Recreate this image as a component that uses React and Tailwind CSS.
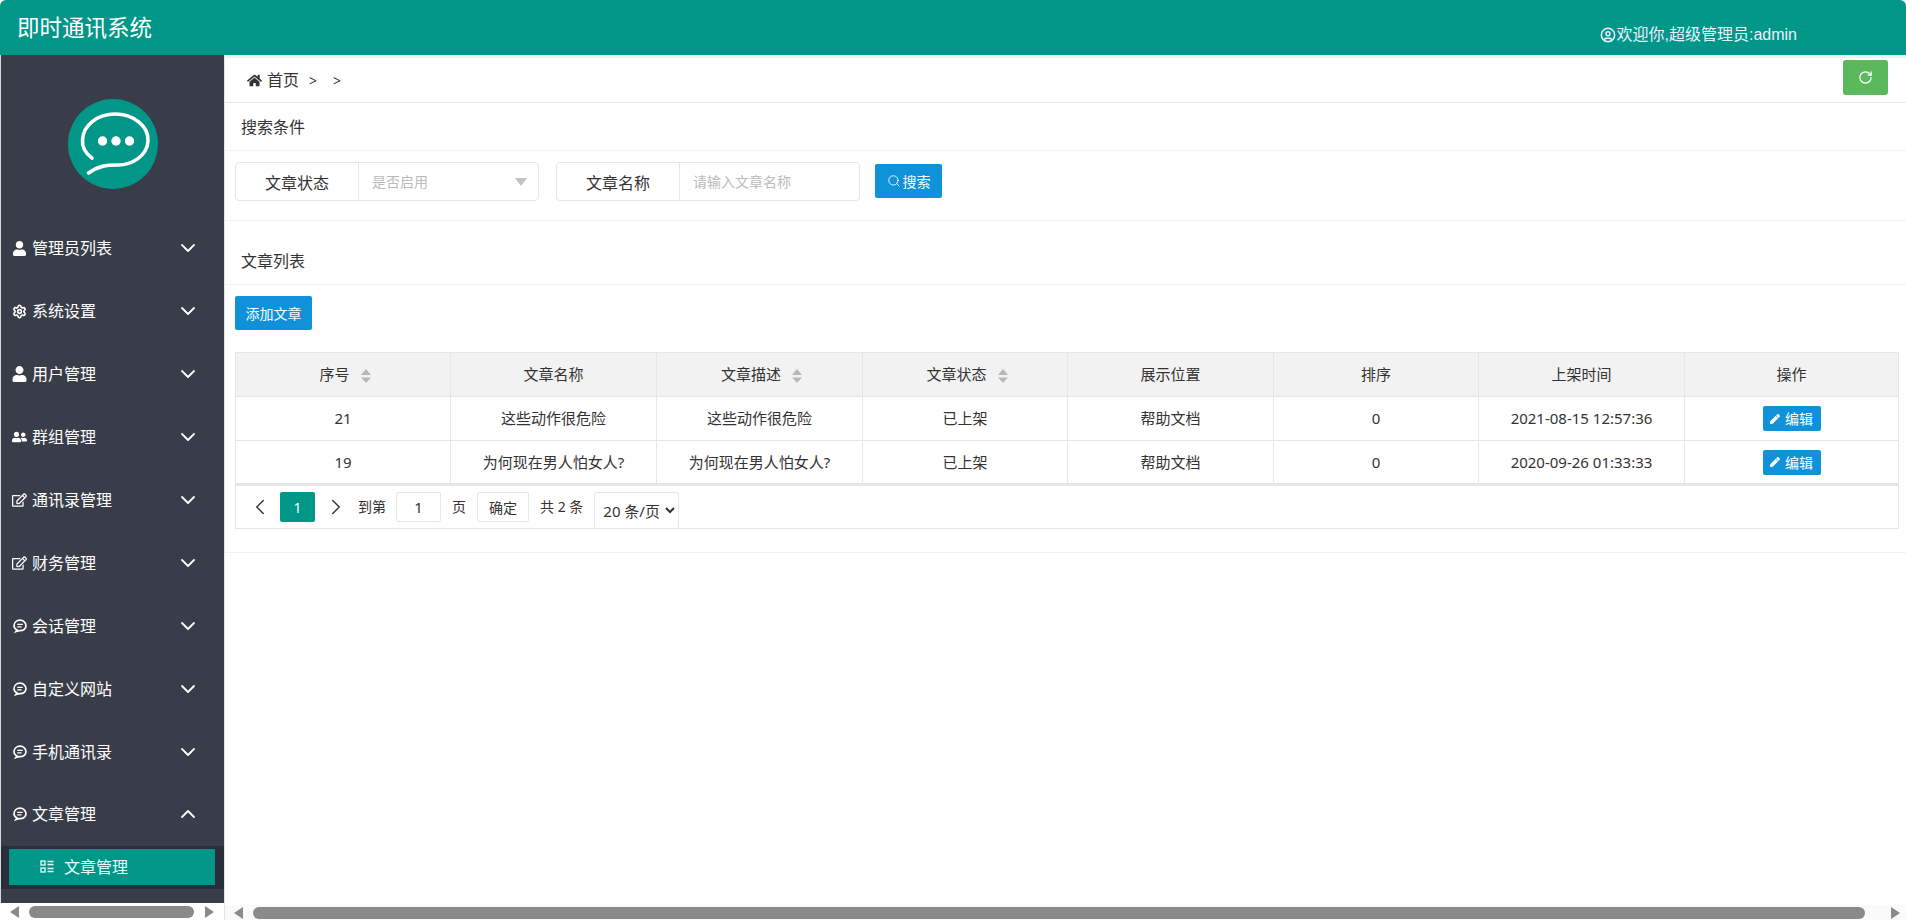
import React from "react"
import { ChevronDown, ChevronUp, ChevronLeft, ChevronRight, Search, RotateCw, CircleUser, Settings } from "lucide-react"
import { FaHome, FaUser, FaUserFriends, FaPen, FaRegEdit } from "react-icons/fa"

const BubbleIcon = () => (
  <svg width="14" height="14" viewBox="0 0 14 14" fill="none" stroke="currentColor">
    <path d="M3 12.5 L4 11 C2 10 1 8.7 1 6.8 C1 3.6 3.6 1.2 7 1.2 C10.4 1.2 13 3.6 13 6.6 C13 9.6 10.4 11.6 7 11.6 C5.4 11.6 4.2 12 3 12.5 Z" strokeWidth="1.7" />
    <path d="M4.2 5.4 H9.8 M4.2 7.8 H8.6" strokeWidth="1.3" />
  </svg>
)

const ListIcon = () => (
  <svg width="14" height="13" viewBox="0 0 14 13" fill="none" stroke="currentColor" strokeWidth="1.3">
    <rect x="1" y="1" width="4" height="4" />
    <rect x="1" y="8" width="4" height="4" />
    <path d="M7.5 1.5 H13.5 M7.5 4.5 H13.5 M7.5 8.5 H13.5 M7.5 11.5 H13.5" />
  </svg>
)

const Logo = () => (
  <svg width="90" height="90" viewBox="0 0 90 90" fill="none">
    <circle cx="45" cy="45" r="45" fill="#009688" />
    <path
      d="M24 59 C17 54 14 47 14.5 41 C15 26 30 15 47 15 C65 15 81 27 80 42 C79 57 64 66 50 66 C38 66 30 67 20.5 74"
      stroke="#fff"
      strokeWidth="3.6"
      strokeLinecap="round"
    />
    <circle cx="34.5" cy="42" r="4.7" fill="#fff" />
    <circle cx="48" cy="42" r="4.7" fill="#fff" />
    <circle cx="61.5" cy="42" r="4.7" fill="#fff" />
  </svg>
)

const SortCaret = () => (
  <svg className="ml-[11px] inline-block align-middle" width="10" height="14" viewBox="0 0 10 14" fill="#b8b8b8">
    <path d="M5 0 L10 6 H0 Z M5 14 L0 8.5 H10 Z" />
  </svg>
)

const Arrow = ({ right }) => (
  <svg width="9" height="12" viewBox="0 0 9 12" fill="#8a8a8a">
    <path d={right ? "M0 0 L9 6 L0 12 Z" : "M9 0 L0 6 L9 12 Z"} />
  </svg>
)

const menus = [
  { name: "管理员列表", icon: <FaUser size={15} /> },
  { name: "系统设置", icon: <Settings size={15} strokeWidth={2.6} /> },
  { name: "用户管理", icon: <FaUser size={16} /> },
  { name: "群组管理", icon: <FaUserFriends size={16} /> },
  { name: "通讯录管理", icon: <FaRegEdit size={16} /> },
  { name: "财务管理", icon: <FaRegEdit size={16} /> },
  { name: "会话管理", icon: <BubbleIcon /> },
  { name: "自定义网站", icon: <BubbleIcon /> },
  { name: "手机通讯录", icon: <BubbleIcon /> },
  { name: "文章管理", icon: <BubbleIcon />, open: true },
]

const rows = [
  { id: 21, title: "这些动作很危险", time: "2021-08-15 12:57:36" },
  { id: 19, title: "为何现在男人怕女人?", time: "2020-09-26 01:33:33" },
]

const Sidebar = () => (
  <aside className="flex w-[225px] shrink-0 flex-col border-r border-[#e4e4e4]">
    <div className="flex-1 border-l border-[#d8d8dc] bg-[#393d49] text-white">
      <div className="flex h-[162px] justify-center pt-[44px]">
        <Logo />
      </div>
      {menus.map((m) => (
        <div key={m.name} className="flex h-[62.9px] items-center pl-[11px] text-[16px]">
          <span className="flex w-[15px] justify-center">{m.icon}</span>
          <span className="ml-[5px]">{m.name}</span>
          <span className="mr-[24px] ml-auto">
            {m.open ? <ChevronUp size={24} strokeWidth={1.8} /> : <ChevronDown size={24} strokeWidth={1.8} />}
          </span>
        </div>
      ))}
      <div className="bg-[#2a2e38] pt-[3px] pr-[9px] pb-[4px] pl-[8px]">
        <div className="flex h-[36px] items-center bg-[#009688] pl-[31px] text-[16px] text-[#e6fffb]">
          <ListIcon />
          <span className="ml-[10px]">文章管理</span>
        </div>
      </div>
    </div>
    <div className="flex h-[17px] items-center bg-white pl-[10px]">
      <Arrow />
      <div className="ml-[10px] h-[12px] w-[165px] rounded-full bg-[#8a8a8a]" />
      <div className="ml-[11px]">
        <Arrow right />
      </div>
    </div>
  </aside>
)

const SearchForm = () => (
  <div className="flex h-[70px] items-start border-b border-[#f2f2f2] pt-[11px] pl-[10px]">
    <div className="flex h-[39px] w-[304px] rounded-[4px] border border-[#e6e6e6]">
      <div className="flex w-[123px] items-center justify-center border-r border-[#e6e6e6] pt-[2px] text-[16px]">
        文章状态
      </div>
      <div className="flex flex-1 items-center justify-between pr-[11px] pl-[13px] text-[14px] text-[#bbb]">
        是否启用
        <svg width="12" height="8" viewBox="0 0 12 8" fill="#c2c2c2">
          <path d="M0 0 H12 L6 8 Z" />
        </svg>
      </div>
    </div>
    <div className="ml-[17px] flex h-[39px] w-[304px] rounded-[4px] border border-[#e6e6e6]">
      <div className="flex w-[123px] items-center justify-center border-r border-[#e6e6e6] pt-[2px] text-[16px]">
        文章名称
      </div>
      <input
        className="min-w-0 flex-1 pl-[13px] text-[14px] outline-none placeholder:text-[#bbb]"
        placeholder="请输入文章名称"
      />
    </div>
    <button className="mt-[2px] ml-[15px] flex h-[34px] w-[67px] items-center justify-center rounded-[2px] bg-[#1092db] text-[14px] text-white">
      <Search size={14} strokeWidth={1.5} className="mr-[2px]" />
      搜索
    </button>
  </div>
)

const ArticleTable = () => (
  <table className="w-full table-fixed border-collapse border border-[#e6e6e6] text-center text-[15px]">
    <colgroup>
      <col className="w-[215px]" />
      <col className="w-[206px]" />
      <col className="w-[206px]" />
      <col className="w-[205px]" />
      <col className="w-[206px]" />
      <col className="w-[205px]" />
      <col className="w-[206px]" />
      <col />
    </colgroup>
    <thead>
      <tr className="h-[44px] bg-[#f2f2f2]">
        <th className="border border-[#e6e6e6] pl-[4px] font-normal">序号<SortCaret /></th>
        <th className="border border-[#e6e6e6] font-normal">文章名称</th>
        <th className="border border-[#e6e6e6] pl-[4px] font-normal">文章描述<SortCaret /></th>
        <th className="border border-[#e6e6e6] pl-[4px] font-normal">文章状态<SortCaret /></th>
        <th className="border border-[#e6e6e6] font-normal">展示位置</th>
        <th className="border border-[#e6e6e6] font-normal">排序</th>
        <th className="border border-[#e6e6e6] font-normal">上架时间</th>
        <th className="border border-[#e6e6e6] font-normal">操作</th>
      </tr>
    </thead>
    <tbody>
      {rows.map((r, i) => (
        <tr key={r.id} className={i === 0 ? "h-[44px]" : "h-[43px]"}>
          <td className="border border-[#e6e6e6]">{r.id}</td>
          <td className="border border-[#e6e6e6]">{r.title}</td>
          <td className="border border-[#e6e6e6]">{r.title}</td>
          <td className="border border-[#e6e6e6]">已上架</td>
          <td className="border border-[#e6e6e6]">帮助文档</td>
          <td className="border border-[#e6e6e6]">0</td>
          <td className="border border-[#e6e6e6]">{r.time}</td>
          <td className="border border-[#e6e6e6]">
            <button className="inline-flex h-[25px] w-[58px] items-center justify-center rounded-[2px] bg-[#1092db] align-middle text-[14px] text-white">
              <FaPen size={10} className="mr-[5px]" />
              编辑
            </button>
          </td>
        </tr>
      ))}
    </tbody>
  </table>
)

const Pager = () => (
  <div className="flex h-[45px] items-start border border-t-2 border-[#e6e6e6] pt-[6px] text-[14px]">
    <ChevronLeft size={26} strokeWidth={1.3} className="mt-[2px] ml-[11px]" />
    <div className="ml-[7px] flex h-[30px] w-[35px] items-center justify-center rounded-[2px] bg-[#009688] text-white">1</div>
    <ChevronRight size={26} strokeWidth={1.3} className="mt-[2px] ml-[8px]" />
    <span className="mt-[4px] ml-[9px]">到第</span>
    <input
      className="ml-[10px] h-[30px] w-[45px] rounded-[2px] border border-[#e6e6e6] text-center text-[15px]"
      defaultValue="1"
    />
    <span className="mt-[4px] ml-[11px]">页</span>
    <button className="ml-[11px] h-[30px] w-[52px] rounded-[2px] border border-[#e6e6e6]">确定</button>
    <span className="mt-[4px] ml-[11px]">共 2 条</span>
    <select className="ml-[11px] h-[37px] w-[85px] shrink-0 rounded-[2px] border border-[#e6e6e6] bg-white pl-[4px] text-[15px]">
      <option>20 条/页</option>
    </select>
  </div>
)

export default function App() {
  return (
    <div
      className="flex h-[920px] w-[1906px] flex-col overflow-hidden bg-white text-[#333]"
      style={{ fontFamily: '"Noto Sans", "Noto Sans CJK SC", sans-serif' }}
    >
      <header className="flex h-[55px] shrink-0 items-center justify-between rounded-t-[6px] bg-[#009688] pr-[109px] pl-[17px] text-white">
        <span className="text-[22.5px]">即时通讯系统</span>
        <span className="flex items-center pt-[15px] font-['Liberation_Sans','Noto_Sans_CJK_SC',sans-serif] text-[16px] text-[#eef]">
          <CircleUser size={16} strokeWidth={2.2} className="mr-px" />
          欢迎你,超级管理员:admin
        </span>
      </header>

      <div className="flex min-h-0 flex-1">
        <Sidebar />
        <main className="flex min-w-0 flex-1 flex-col">
          <div className="h-[3px] bg-[#e8f4f4]" />
          <div className="flex h-[45px] items-center border-b border-[#e6e6e6] pr-[18px] pl-[22px] text-[16px]">
            <FaHome size={15} />
            <span className="ml-[5px]">首页</span>
            <span className="ml-[10px] text-[14px]">&gt;</span>
            <span className="ml-[16px] text-[14px]">&gt;</span>
            <button className="mt-[-6px] ml-auto flex h-[35px] w-[45px] items-center justify-center rounded-[3px] bg-[#5cb85c] text-white">
              <RotateCw size={15} />
            </button>
          </div>
          <div className="flex h-[48px] items-center border-b border-[#f2f2f2] pl-[16px] text-[16px]">搜索条件</div>
          <SearchForm />
          <div className="flex h-[64px] items-end border-b border-[#f2f2f2] pb-[11px] pl-[16px] text-[16px]">文章列表</div>
          <div className="pr-[7px] pl-[10px]">
            <button className="mt-[11px] h-[34px] w-[77px] rounded-[2px] bg-[#1092db] text-[14px] text-white">添加文章</button>
            <div className="mt-[22px]">
              <ArticleTable />
              <Pager />
            </div>
          </div>
          <div className="mt-[23px] border-b border-[#f2f2f2]" />
          <div className="flex-1" />
          <div className="flex h-[15px] items-end bg-[#fafafa] pb-px pl-[9px]">
            <Arrow />
            <div className="ml-[10px] h-[12px] w-[1612px] rounded-full bg-[#8a8a8a]" />
            <div className="ml-[26px]">
              <Arrow right />
            </div>
          </div>
        </main>
      </div>
    </div>
  )
}
